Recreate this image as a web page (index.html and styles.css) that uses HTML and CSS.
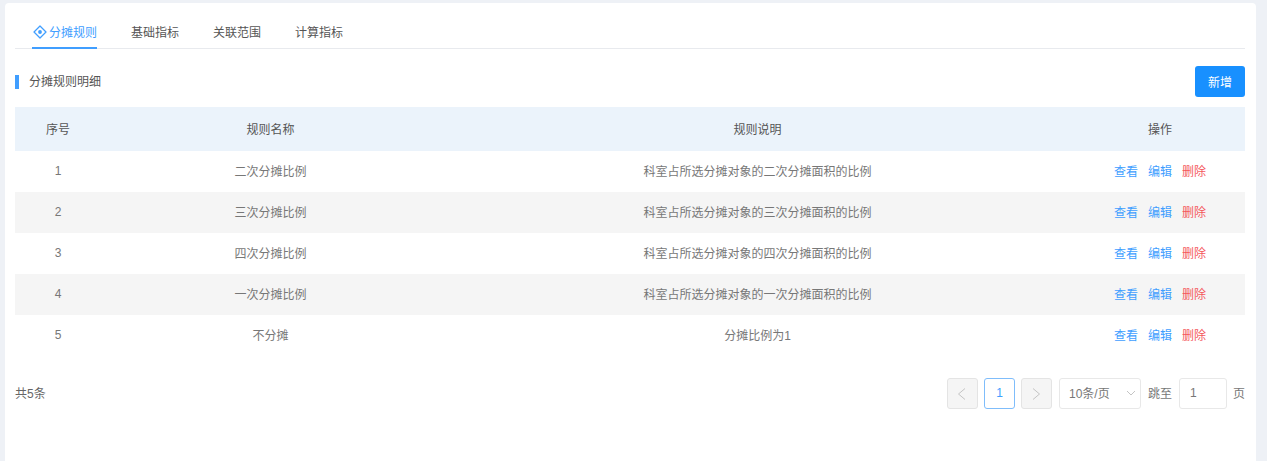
FILE: index.html
```html
<!DOCTYPE html>
<html lang="zh-CN">
<head>
<meta charset="utf-8">
<title>分摊规则</title>
<link rel="stylesheet" href="styles.css">
</head>
<body>
<main class="card">
  <nav class="tabs">
    <a class="tab active">
      <svg class="tab-icon" viewBox="0 0 14 14" width="14" height="14" aria-hidden="true"><path d="M7 1 13 7 7 13 1 7Z" fill="none" stroke="currentColor" stroke-width="1.3" stroke-linejoin="round"/><circle cx="7" cy="7" r="1.9" fill="currentColor"/></svg>
      分摊规则
    </a>
    <a class="tab">基础指标</a>
    <a class="tab">关联范围</a>
    <a class="tab">计算指标</a>
  </nav>
  <div class="section-head">
    <h2 class="section-title">分摊规则明细</h2>
    <button class="btn-primary">新增</button>
  </div>
  <table class="rules">
    <colgroup><col class="c-no"><col class="c-name"><col class="c-desc"><col class="c-act"></colgroup>
    <thead><tr><th>序号</th><th>规则名称</th><th>规则说明</th><th>操作</th></tr></thead>
    <tbody>
      <tr><td>1</td><td>二次分摊比例</td><td>科室占所选分摊对象的二次分摊面积的比例</td><td class="actions"><a class="link">查看</a><a class="link">编辑</a><a class="link danger">删除</a></td></tr>
      <tr><td>2</td><td>三次分摊比例</td><td>科室占所选分摊对象的三次分摊面积的比例</td><td class="actions"><a class="link">查看</a><a class="link">编辑</a><a class="link danger">删除</a></td></tr>
      <tr><td>3</td><td>四次分摊比例</td><td>科室占所选分摊对象的四次分摊面积的比例</td><td class="actions"><a class="link">查看</a><a class="link">编辑</a><a class="link danger">删除</a></td></tr>
      <tr><td>4</td><td>一次分摊比例</td><td>科室占所选分摊对象的一次分摊面积的比例</td><td class="actions"><a class="link">查看</a><a class="link">编辑</a><a class="link danger">删除</a></td></tr>
      <tr><td>5</td><td>不分摊</td><td>分摊比例为1</td><td class="actions"><a class="link">查看</a><a class="link">编辑</a><a class="link danger">删除</a></td></tr>
    </tbody>
  </table>
  <div class="pager-row">
    <span class="total">共5条</span>
    <div class="pager">
      <span class="page-btn disabled"><svg viewBox="0 0 12 12" width="12" height="12" aria-hidden="true"><path d="M9 .5 2.500 6 9 11.500" fill="none" stroke="currentColor"/></svg></span>
      <span class="page-btn current">1</span>
      <span class="page-btn disabled"><svg viewBox="0 0 12 12" width="12" height="12" aria-hidden="true"><path d="M3 .5 9.500 6 3 11.500" fill="none" stroke="currentColor"/></svg></span>
      <span class="page-size">10条/页<svg class="chev" viewBox="0 0 10 6" width="10" height="6" aria-hidden="true"><path d="M1 1 5 5 9 1" fill="none" stroke="currentColor"/></svg></span>
      <span class="jump-label">跳至</span>
      <span class="jump-input">1</span>
      <span class="jump-unit">页</span>
    </div>
  </div>
</main>
</body>
</html>
```
FILE: styles.css
```css
* { box-sizing: border-box; }
html, body { margin: 0; height: 100%; overflow: hidden; }
body {
  background: #eef1f6;
  padding: 3px 11px 0 5px;
  font-family: "Liberation Sans", "Noto Sans CJK SC", sans-serif;
  font-size: 12px;
  color: #666;
}
.card {
  background: #fff;
  border-radius: 4px 4px 0 0;
  height: 100%;
  padding: 0 11px 0 10px;
}
.tabs {
  display: flex;
  gap: 34px;
  height: 46px;
  padding-left: 17px;
  border-bottom: 1px solid #e8eaee;
}
.tab {
  display: flex;
  align-items: center;
  gap: 2px;
  height: 46px;
  padding-top: 11px;
  color: #555;
}
.tab.active {
  color: #409eff;
  border-bottom: 2px solid #409eff;
  padding-top: 13px;
}
.tab-icon { margin-left: 1px; }
.section-head {
  display: flex;
  justify-content: space-between;
  align-items: center;
  height: 31px;
  margin-top: 17px;
}
.section-title {
  margin: 0;
  font-size: 12px;
  font-weight: 400;
  line-height: 14px;
  color: #555;
  padding-left: 10px;
  border-left: 4px solid #409eff;
}
.btn-primary {
  width: 50px;
  height: 31px;
  border: 0;
  border-radius: 3px;
  background: #1890ff;
  color: #fff;
  font: inherit;
  padding: 0;
}
.rules {
  width: 100%;
  table-layout: fixed;
  border-collapse: collapse;
  margin-top: 10px;
}
.c-no { width: 86px; }
.c-name { width: 339px; }
.c-desc { width: 635px; }
.c-act { width: 170px; }
.rules th {
  height: 44px;
  padding: 0 0 2px;
  background: #ebf3fb;
  font-weight: 400;
  color: #555;
}
.rules td {
  height: 41px;
  padding: 0 0 2px;
  text-align: center;
  color: #777;
}
.rules tbody tr:nth-child(even) td { background: #f5f5f5; }
.rules td.actions { white-space: nowrap; }
.link { color: #409eff; margin: 0 5px; }
.link.danger { color: #f4585b; }
.pager-row {
  display: flex;
  justify-content: space-between;
  align-items: center;
  height: 31px;
  margin-top: 22px;
}
.total { padding: 0 0 2px; color: #666; }
.pager { display: flex; align-items: center; }
.page-btn {
  display: flex;
  align-items: center;
  justify-content: center;
  width: 31px;
  height: 31px;
  margin-right: 6px;
  border: 1px solid #e4e4e4;
  border-radius: 3px;
}
.page-btn.disabled { background: #f5f5f5; color: #c4c4c4; }
.page-btn.current { background: #fff; border-color: #7fbdfb; color: #409eff; padding-bottom: 2px; }
.page-size {
  display: flex;
  align-items: center;
  justify-content: space-between;
  width: 82px;
  height: 31px;
  margin-left: 1px;
  padding: 0 4px 2px 9px;
  border: 1px solid #e8e8e8;
  border-radius: 3px;
  color: #777;
}
.chev { color: #c4c4c4; }
.jump-label { margin: 0 7px; padding-bottom: 2px; color: #777; }
.jump-input {
  display: flex;
  align-items: center;
  width: 48px;
  height: 31px;
  padding: 0 0 2px 10px;
  border: 1px solid #e8e8e8;
  border-radius: 3px;
  color: #777;
}
.jump-unit { margin-left: 6px; padding-bottom: 2px; color: #777; }
```
